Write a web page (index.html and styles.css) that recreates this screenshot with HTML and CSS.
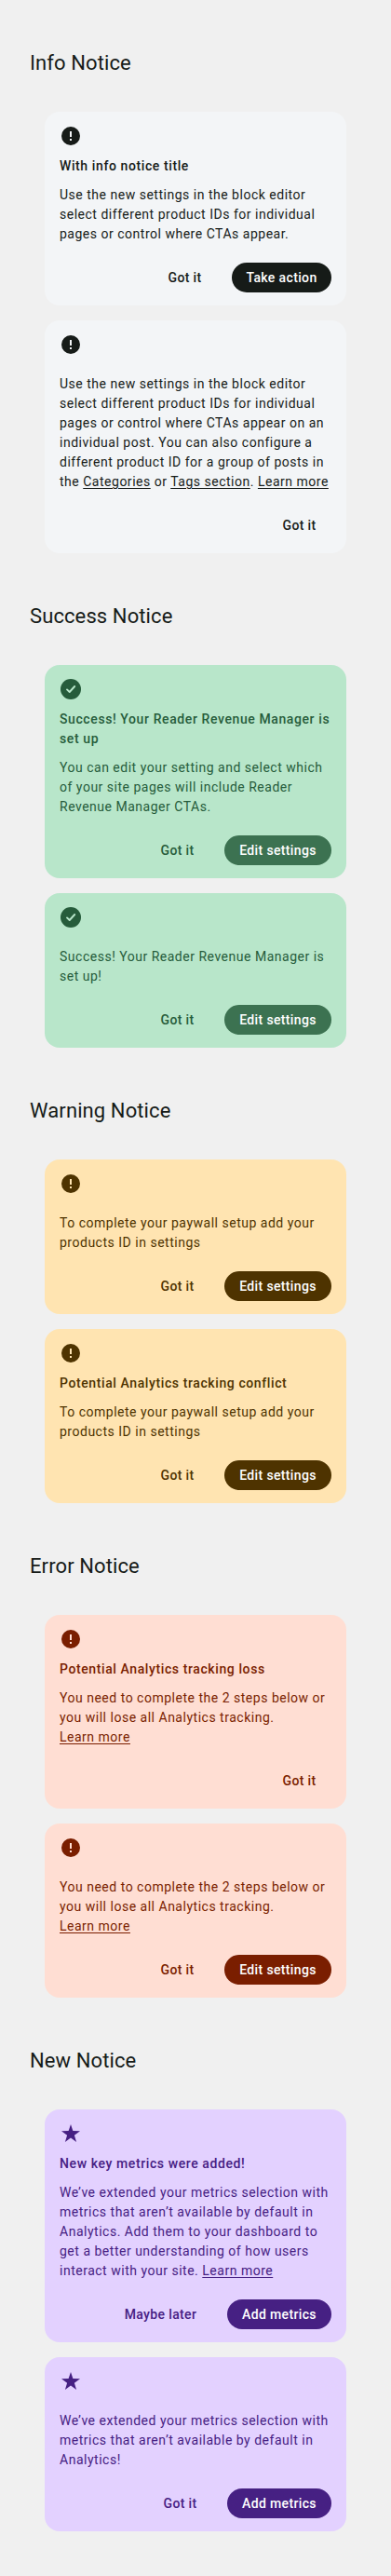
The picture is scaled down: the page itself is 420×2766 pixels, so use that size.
FILE: index.html
```html
<!DOCTYPE html>
<html lang="en">
<head>
<meta charset="utf-8">
<title>Notices</title>
<link rel="stylesheet" href="styles.css">
</head>
<body>
<svg class="sprite" aria-hidden="true">
  <symbol id="alert" viewBox="0 0 24 24"><path d="M12 2a10 10 0 1 0 0 20 10 10 0 0 0 0-20zm1 15h-2v-2h2zm0-4h-2V7h2z"/></symbol>
  <symbol id="check" viewBox="0 0 24 24"><circle cx="12" cy="12" r="11"/><path class="tick" d="M8 12.4l2.7 2.6 5.5-6"/></symbol>
  <symbol id="star" viewBox="0 0 24 24"><path d="M12 2l2.36 7.1 7.64.1-6.1 4.5 2.2 7.3L12 16.6 5.9 21l2.2-7.3L2 9.2l7.64-.1z"/></symbol>
</svg>

<section class="group">
  <h2 class="heading">Info Notice</h2>
  <div class="notice info">
    <svg class="icon"><use href="#alert"/></svg>
    <h3 class="title">With info notice title</h3>
    <p class="text">Use the new settings in the block editor<br>select different product IDs for individual<br>pages or control where CTAs appear.</p>
    <div class="actions"><button class="link">Got it</button><button class="cta take">Take action</button></div>
  </div>
  <div class="notice info untitled">
    <svg class="icon"><use href="#alert"/></svg>
    <p class="text">Use the new settings in the block editor<br>select different product IDs for individual<br>pages or control where CTAs appear on an<br>individual post. You can also configure a<br>different product ID for a group of posts in<br>the <a>Categories</a> or <a>Tags section</a>. <a>Learn more</a></p>
    <div class="actions"><button class="link">Got it</button></div>
  </div>
</section>

<section class="group">
  <h2 class="heading">Success Notice</h2>
  <div class="notice success">
    <svg class="icon"><use href="#check"/></svg>
    <h3 class="title">Success! Your Reader Revenue Manager is<br>set up</h3>
    <p class="text">You can edit your setting and select which<br>of your site pages will include Reader<br>Revenue Manager CTAs.</p>
    <div class="actions"><button class="link">Got it</button><button class="cta edit">Edit settings</button></div>
  </div>
  <div class="notice success untitled">
    <svg class="icon"><use href="#check"/></svg>
    <p class="text">Success! Your Reader Revenue Manager is<br>set up!</p>
    <div class="actions"><button class="link">Got it</button><button class="cta edit">Edit settings</button></div>
  </div>
</section>

<section class="group">
  <h2 class="heading">Warning Notice</h2>
  <div class="notice warning untitled">
    <svg class="icon"><use href="#alert"/></svg>
    <p class="text">To complete your paywall setup add your<br>products ID in settings</p>
    <div class="actions"><button class="link">Got it</button><button class="cta edit">Edit settings</button></div>
  </div>
  <div class="notice warning">
    <svg class="icon"><use href="#alert"/></svg>
    <h3 class="title">Potential Analytics tracking conflict</h3>
    <p class="text">To complete your paywall setup add your<br>products ID in settings</p>
    <div class="actions"><button class="link">Got it</button><button class="cta edit">Edit settings</button></div>
  </div>
</section>

<section class="group">
  <h2 class="heading">Error Notice</h2>
  <div class="notice error">
    <svg class="icon"><use href="#alert"/></svg>
    <h3 class="title">Potential Analytics tracking loss</h3>
    <p class="text">You need to complete the 2 steps below or<br>you will lose all Analytics tracking.<br><a>Learn more</a></p>
    <div class="actions"><button class="link">Got it</button></div>
  </div>
  <div class="notice error untitled">
    <svg class="icon"><use href="#alert"/></svg>
    <p class="text">You need to complete the 2 steps below or<br>you will lose all Analytics tracking.<br><a>Learn more</a></p>
    <div class="actions"><button class="link">Got it</button><button class="cta edit">Edit settings</button></div>
  </div>
</section>

<section class="group">
  <h2 class="heading">New Notice</h2>
  <div class="notice new">
    <svg class="icon"><use href="#star"/></svg>
    <h3 class="title">New key metrics were added!</h3>
    <p class="text">We’ve extended your metrics selection with<br>metrics that aren’t available by default in<br>Analytics. Add them to your dashboard to<br>get a better understanding of how users<br>interact with your site. <a>Learn more</a></p>
    <div class="actions"><button class="link later">Maybe later</button><button class="cta add">Add metrics</button></div>
  </div>
  <div class="notice new untitled">
    <svg class="icon"><use href="#star"/></svg>
    <p class="text">We’ve extended your metrics selection with<br>metrics that aren’t available by default in<br>Analytics!</p>
    <div class="actions"><button class="link">Got it</button><button class="cta add">Add metrics</button></div>
  </div>
</section>
</body>
</html>
```
FILE: styles.css
```css
* { box-sizing: border-box; }
body {
  margin: 0;
  padding-bottom: 48px;
  background: #f0f0f0;
  color: #161b18;
  font-family: Roboto, sans-serif;
  font-size: 14px;
  line-height: 21px;
}
.sprite { display: none; }
.group { display: flex; flex-direction: column; gap: 16px; padding: 0 48px; }
.heading {
  height: 104px;
  margin: 0 0 0 -16px;
  padding-top: 54px;
  font-size: 22px;
  font-weight: 400;
  line-height: 28px;
  letter-spacing: .1px;
}
.notice {
  display: flex;
  flex-direction: column;
  gap: 10px;
  padding: 14px 16px;
  border-radius: 16px;
  background: var(--bg);
  color: var(--fg);
}
.icon { width: 24px; height: 24px; fill: var(--fg); }
.tick { fill: none; stroke: var(--bg); stroke-width: 1.9; stroke-linecap: round; stroke-linejoin: round; }
.title { margin: 0; font-size: 14px; font-weight: 500; line-height: 21px; letter-spacing: .6px; white-space: nowrap; }
.text { margin: 0; letter-spacing: .51px; white-space: nowrap; }
.untitled .text { margin-top: 10px; }
.text a { text-decoration: underline; text-underline-offset: 2px; }
.actions { display: flex; justify-content: flex-end; gap: 16px; margin-top: 10px; }
.link, .cta {
  height: 32px;
  padding: 0;
  border: 0;
  border-radius: 16px;
  background: none;
  color: var(--fg);
  font: 500 14px/32px Roboto, sans-serif;
  letter-spacing: .36px;
  white-space: nowrap;
}
.link { width: 69px; }
.later { width: 111px; }
.cta { background: var(--cta, var(--fg)); color: #fff; }
.take { width: 107px; }
.edit { width: 115px; }
.add { width: 112px; }
.info { --bg: #f3f5f7; --fg: #161b18; }
.success { --bg: #b8e6ca; --fg: #265c3b; --cta: #3c7251; }
.warning { --bg: #ffe4b1; --fg: #4e3300; }
.error { --bg: #ffded3; --fg: #7a1e00; }
.new { --bg: #e3d1ff; --fg: #462083; }
```
